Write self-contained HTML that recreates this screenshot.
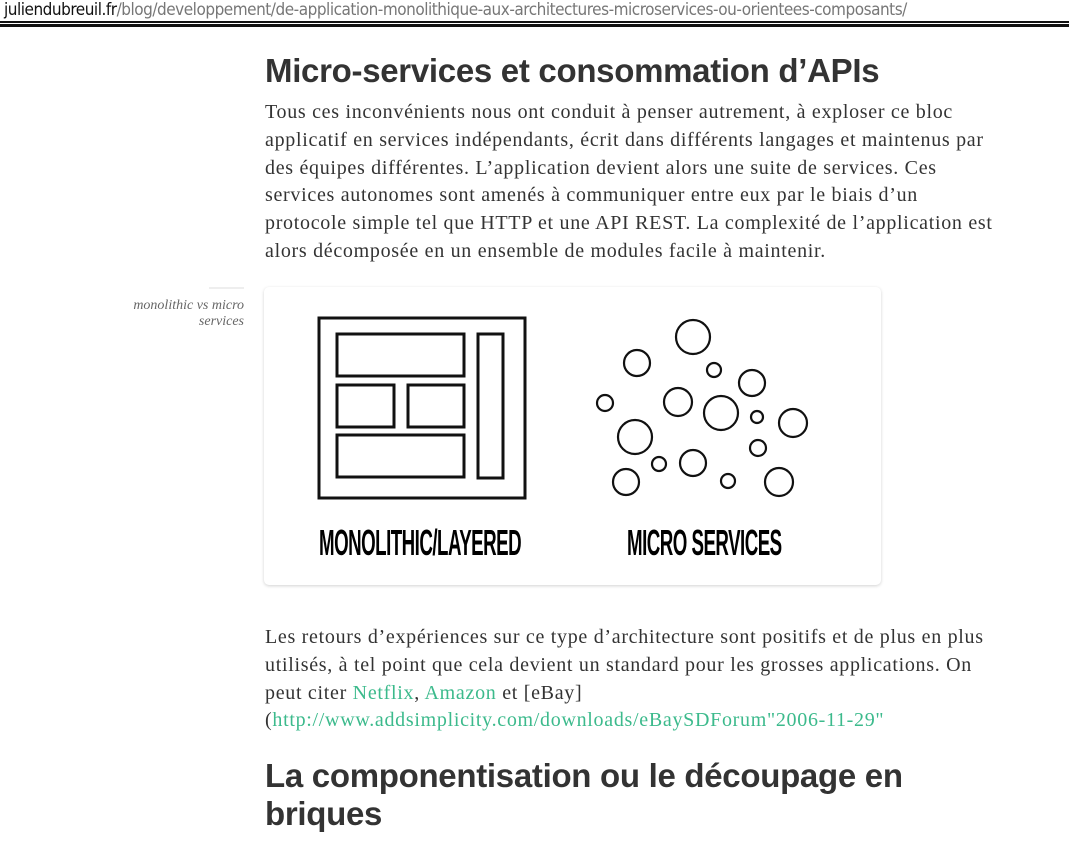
<!DOCTYPE html>
<html><head><meta charset="utf-8"><style>
body{margin:0;background:#fff;width:1069px;height:842px;overflow:hidden;position:relative;font-family:"Liberation Serif",serif;color:#333}
.url{position:absolute;left:4px;top:0;font:17px "DejaVu Sans Condensed","Liberation Sans",sans-serif;color:#777;letter-spacing:-0.48px;white-space:nowrap}
.url b{font-weight:normal;color:#111}
.bar1{position:absolute;left:0;top:21px;width:1069px;height:2px;background:#111}
.bar2{position:absolute;left:0;top:24px;width:1069px;height:3px;background:#111}
h2{position:absolute;left:265px;margin:0;font:bold 33px/40px "Liberation Sans",sans-serif;color:#333;letter-spacing:-0.3px;white-space:nowrap}
p{position:absolute;left:265px;margin:0;font-size:20px;letter-spacing:0.7px;line-height:27.8px;color:#333;white-space:nowrap}
a{color:#3cba8c;text-decoration:none}
.cap{position:absolute;left:100px;top:298px;width:144px;text-align:right;font-style:italic;font-size:14px;line-height:16px;color:#666}
.capline{position:absolute;left:209px;top:287px;width:35px;height:2px;background:#eee}
.fig{position:absolute;left:264px;top:287px;width:617px;height:298px;border-radius:5px;box-shadow:0 1px 3px rgba(0,0,0,.18);background:#fff}
.lbl{position:absolute;font:bold 36px "Liberation Sans Narrow","Liberation Sans",sans-serif;color:#000;transform:scaleX(.52);transform-origin:left;white-space:nowrap;letter-spacing:-1px}
</style></head><body>
<div class="url"><b>juliendubreuil.fr</b>/blog/developpement/de-application-monolithique-aux-architectures-microservices-ou-orientees-composants/</div>
<div class="bar1"></div><div class="bar2"></div>
<h2 style="top:51px">Micro-services et consommation d’APIs</h2>
<p style="top:99px">Tous ces inconvénients nous ont conduit à penser autrement, à exploser ce bloc<br>applicatif en services indépendants, écrit dans différents langages et maintenus par<br>des équipes différentes. L’application devient alors une suite de services. Ces<br>services autonomes sont amenés à communiquer entre eux par le biais d’un<br>protocole simple tel que HTTP et une API REST. La complexité de l’application est<br>alors décomposée en un ensemble de modules facile à maintenir.</p>
<div class="capline"></div>
<div class="cap">monolithic vs micro<br>services</div>
<div class="fig"></div>
<svg style="position:absolute;left:0;top:0" width="1069" height="842" fill="none" stroke="#111">
<rect x="319" y="318" width="206" height="180" stroke-width="3"/>
<rect x="337" y="334" width="127" height="42" stroke-width="3"/>
<rect x="337" y="385" width="57" height="42" stroke-width="3"/>
<rect x="408" y="385" width="56" height="42" stroke-width="3"/>
<rect x="337" y="435" width="127" height="42" stroke-width="3"/>
<rect x="478" y="334" width="25" height="144" stroke-width="3"/>
<g stroke-width="2.2">
<circle cx="693" cy="337" r="17"/><circle cx="637" cy="363" r="13"/><circle cx="714" cy="370" r="7"/>
<circle cx="752" cy="383" r="13"/><circle cx="605" cy="403" r="8"/><circle cx="678" cy="402" r="14"/>
<circle cx="721" cy="413" r="17"/><circle cx="757" cy="417" r="6"/><circle cx="793" cy="423" r="14"/>
<circle cx="635" cy="437" r="17"/><circle cx="659" cy="464" r="7"/><circle cx="693" cy="463" r="13"/>
<circle cx="758" cy="448" r="8"/><circle cx="626" cy="482" r="13"/><circle cx="728" cy="481" r="7"/>
<circle cx="779" cy="482" r="14"/>
</g></svg>
<div class="lbl" style="left:319px;top:522px">MONOLITHIC/LAYERED</div>
<div class="lbl" style="left:627px;top:522px">MICRO SERVICES</div>
<p style="top:624px">Les retours d’expériences sur ce type d’architecture sont positifs et de plus en plus<br>utilisés, à tel point que cela devient un standard pour les grosses applications. On<br>peut citer <a>Netflix</a>, <a>Amazon</a> et [eBay]<br>(<a>http://www.addsimplicity.com/downloads/eBaySDForum"2006-11-29"</a></p>
<h2 style="top:757px;line-height:38px">La componentisation ou le découpage en<br>briques</h2>
</body></html>
